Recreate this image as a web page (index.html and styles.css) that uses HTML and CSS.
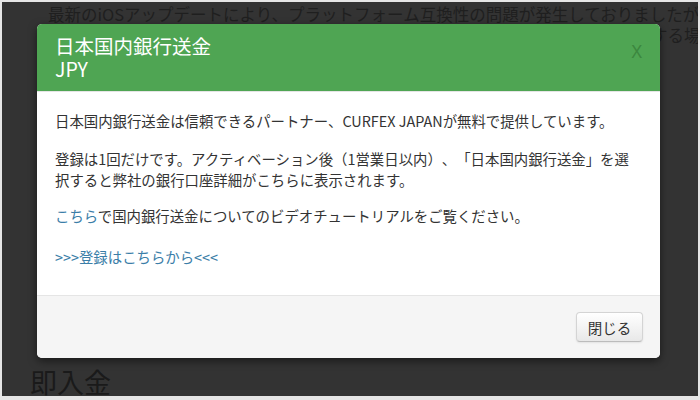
FILE: index.html
```
<!DOCTYPE html>
<html lang="ja">
<head>
<meta charset="utf-8">
<link rel="stylesheet" href="styles.css">
</head>
<body>
<div class="frame">
  <div class="page">
    <p class="notice">最新のiOSアップデートにより、プラットフォーム互換性の問題が発生しておりましたが、現</p>
    <p class="notice notice-2">現在は解決済みです。引き続きご不便をおかけする場合</p>
    <h2 class="section">即入金</h2>
  </div>
  <div class="modal">
    <div class="modal-header">
      <h3 class="modal-title">日本国内銀行送金<br>JPY</h3>
      <span class="close">X</span>
    </div>
    <div class="modal-body">
      <p class="p1">日本国内銀行送金は信頼できるパートナー、CURFEX JAPANが無料で提供しています。</p>
      <p class="p2">登録は1回だけです。アクティベーション後（1営業日以内）、「日本国内銀行送金」を選択すると弊社の銀行口座詳細がこちらに表示されます。</p>
      <p class="p3"><a href="#" class="link">こちら</a>で国内銀行送金についてのビデオチュートリアルをご覧ください。</p>
      <p class="p4"><a href="#" class="link">&gt;&gt;&gt;登録はこちらから&lt;&lt;&lt;</a></p>
    </div>
    <div class="modal-footer">
      <button class="btn">閉じる</button>
    </div>
  </div>
</div>
</body>
</html>
```
FILE: styles.css
```
html, body {
  margin: 0;
  padding: 0;
}
body {
  font-family: "Noto Sans CJK JP", "Noto Sans", sans-serif;
}
.frame {
  position: relative;
  width: 700px;
  height: 400px;
  box-sizing: border-box;
  border: 2px solid #e6e6e6;
  border-bottom-width: 4px;
  background: #333333;
  overflow: hidden;
}
.page {
  padding-left: 46px;
  width: 800px;
}
.notice {
  margin: 2px 0 0;
  font-size: 16.5px;
  line-height: 21px;
  color: #1f1f1f;
  white-space: nowrap;
}
.notice-2 {
  margin-top: 0;
  width: 669px;
  text-align: right;
}
.section {
  margin: 321px 0 0 -18px;
  font-size: 27px;
  font-weight: normal;
  line-height: 30px;
  color: #1a1a1a;
}
.modal {
  position: absolute;
  left: 35px;
  top: 22px;
  width: 623px;
  height: 334px;
  background: #fff;
  border-radius: 5px;
  overflow: hidden;
  box-shadow: 0 3px 9px rgba(0, 0, 0, 0.5);
  display: flex;
  flex-direction: column;
}
.modal-header {
  background: #4fa553;
  height: 68px;
  box-sizing: border-box;
  padding: 10px 18px 0 18px;
  display: flex;
  justify-content: space-between;
  align-items: flex-start;
  border-bottom: 1px solid #e5e5e5;
}
.modal-title {
  margin: 0;
  font-size: 19.5px;
  font-weight: normal;
  line-height: 23px;
  color: #ffffff;
}
.close {
  font-family: "Noto Sans", sans-serif;
  font-size: 18px;
  line-height: 20px;
  margin-top: 7px;
  color: #3c873f;
}
.modal-body {
  padding: 18px 18px 0 18px;
  flex: 1;
  font-size: 14.4px;
  line-height: 21px;
  color: #333333;
  text-spacing-trim: space-all;
}
.modal-body p {
  margin: 0;
}
.p1 { margin-bottom: 17px !important; }
.p2 { margin-bottom: 15px !important; }
.p3 { margin-bottom: 20px !important; }
.link {
  color: #3b7ea8;
  text-decoration: none;
}
.modal-footer {
  background: #f5f5f5;
  border-top: 1px solid #e5e5e5;
  height: 63px;
  box-sizing: border-box;
  padding: 16px 17px 0 0;
  display: flex;
  justify-content: flex-end;
  align-items: flex-start;
}
.btn {
  font-family: "Noto Sans CJK JP", sans-serif;
  font-size: 14.5px;
  color: #333;
  width: 67px;
  height: 30px;
  border: 1px solid #d4d4d4;
  border-bottom-color: #bcbcbc;
  border-radius: 4px;
  background: linear-gradient(#ffffff, #e8e8e8);
  box-shadow: 0 1px 2px rgba(0, 0, 0, 0.08);
  padding: 0;
}
```
